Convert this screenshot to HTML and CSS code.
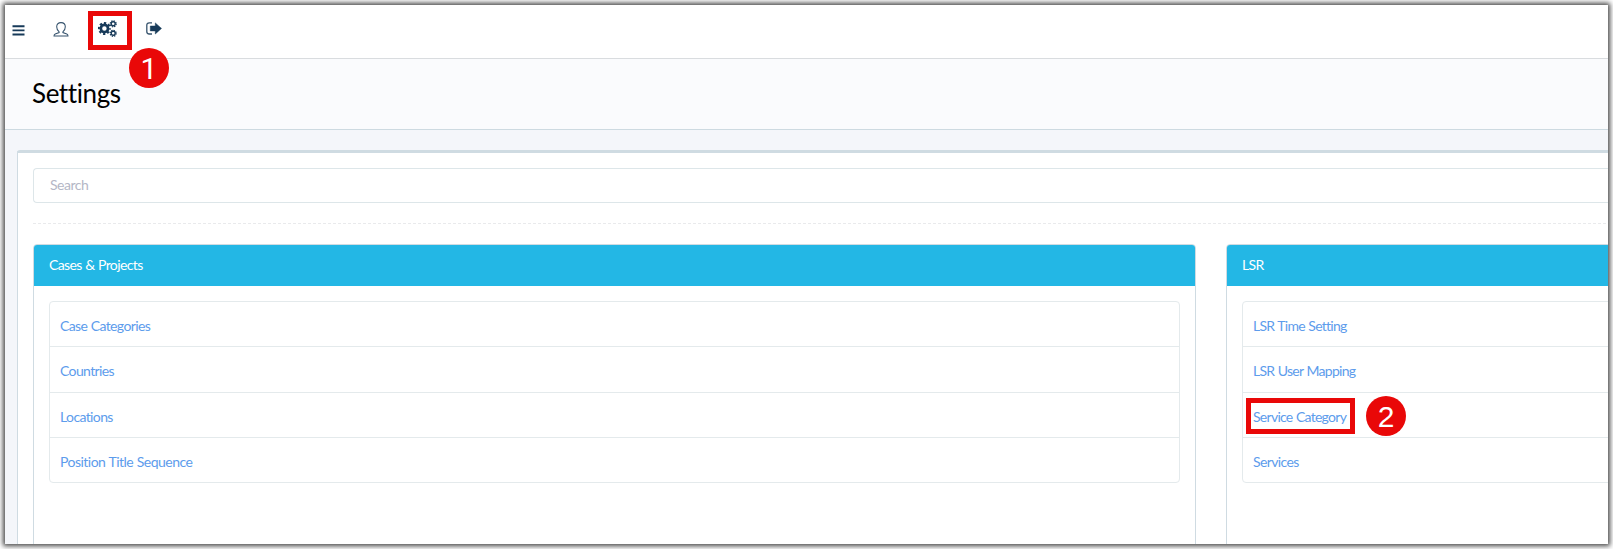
FILE: index.html
```
<!DOCTYPE html>
<html lang="en">
<head>
<meta charset="utf-8">
<title>Settings</title>
<link rel="stylesheet" href="styles.css">
</head>
<body>
<div class="frame">
  <nav class="topbar">
    <svg class="icon menu" viewBox="0 0 13 11"><path d="M.5 1.3h12M.5 5.4h12M.5 9.5h12" stroke="#173a59" stroke-width="1.9"/></svg>
    <svg class="icon user" viewBox="0 0 16 15"><path d="M6.1 9.8C4.6 8.7 3.7 6.9 3.7 4.8 3.7 2.2 5.4.6 8 .6s4.3 1.6 4.3 4.2c0 2.1-.9 3.9-2.4 5v.8l3.9 1.3c.9.3 1.2.8 1.2 2.1H1c0-1.3.3-1.8 1.2-2.1l3.9-1.3z" fill="none" stroke="#36536d" stroke-width="1.05"/></svg>
    <svg class="icon gears" viewBox="0 0 20 18">
      <g fill="none" stroke="#173a59">
        <circle cx="6.4" cy="8.5" r="3.6" stroke-width="2.7"/>
        <circle cx="6.4" cy="8.5" r="5.5" stroke-width="2" stroke-dasharray="2.3 2.02" stroke-dashoffset="1.15"/>
        <circle cx="15.2" cy="3.8" r="2" stroke-width="1.4"/>
        <circle cx="15.2" cy="3.8" r="3" stroke-width="1.2" stroke-dasharray="1.35 1.006"/>
        <circle cx="15.2" cy="13.3" r="2" stroke-width="1.4"/>
        <circle cx="15.2" cy="13.3" r="3" stroke-width="1.2" stroke-dasharray="1.35 1.006"/>
      </g>
    </svg>
    <svg class="icon exit" viewBox="0 0 16 13"><path d="M6 .8H3.3Q.8.8.8 3.3v6.2q0 2.5 2.5 2.5H6" fill="none" stroke="#36536d" stroke-width="1.3"/><path d="M4.3 4h5V.9L15.5 6.4 9.3 12V8.900h-5z" fill="#173a59" stroke="#173a59" stroke-width=".5" stroke-linejoin="round"/></svg>
    <span class="mark mark-gears"></span>
    <span class="step step-one">1</span>
  </nav>
  <header class="heading"><h1>Settings</h1></header>
  <main class="content">
    <section class="card">
      <div class="search">Search</div>
      <svg class="divider"><line x1="0" y1=".5" x2="1600" y2=".5" stroke="#e9eaec" stroke-dasharray="3 2"/></svg>
      <div class="panels">
        <section class="panel">
          <h2>Cases &amp; Projects</h2>
          <ul>
            <li><a>Case Categories</a></li>
            <li><a>Countries</a></li>
            <li><a>Locations</a></li>
            <li class="long"><a>Position Title Sequence</a></li>
          </ul>
        </section>
        <section class="panel">
          <h2>LSR</h2>
          <ul>
            <li class="tight"><a>LSR Time Setting</a></li>
            <li class="tight"><a>LSR User Mapping</a></li>
            <li class="tight"><a>Service Category</a><span class="mark mark-service"></span><span class="step step-two">2</span></li>
            <li><a>Services</a></li>
          </ul>
        </section>
      </div>
    </section>
  </main>
</div>
</body>
</html>
```
FILE: styles.css
```
* { box-sizing: border-box; }
body {
  margin: 0;
  padding: 5px;
  height: 549px;
  overflow: hidden;
  background: #fff;
  font-family: Lato, "Open Sans", sans-serif;
  font-size: 14px;
  letter-spacing: -0.62px;
  word-spacing: 0.5px;
}
.frame {
  width: 1603px;
  height: 539px;
  overflow: hidden;
  display: flex;
  flex-direction: column;
  background: #f4f6fa;
  box-shadow: 0 0 5px 2px #000b;
}
.topbar {
  position: relative;
  flex: 0 0 54px;
  display: flex;
  align-items: flex-start;
  background: #fff;
  border-bottom: 1px solid #d9dcdf;
}
.icon { display: block; flex: none; }
.menu { width: 13px; height: 11px; margin: 20px 0 0 7px; }
.user { width: 16px; height: 15px; margin: 17px 0 0 28px; }
.gears { width: 20px; height: 18px; margin: 15px 0 0 29px; }
.exit { width: 16px; height: 13px; margin: 17px 0 0 28px; }
.heading {
  flex: 0 0 71px;
  padding: 17px 27px;
  background: #fafbfd;
  border-bottom: 1px solid #cddae1;
}
h1 {
  margin: 0;
  font-size: 26px;
  line-height: 34px;
  font-weight: 400;
  letter-spacing: -0.4px;
  color: #000;
}
.content { flex: 1; padding: 20px 0 0 12px; }
.card {
  height: 500px;
  padding: 15px 0 0 15px;
  background: #fff;
  border: solid #cfdbe2;
  border-width: 3px 0 0 1px;
  border-radius: 3px 0 0 0;
}
.search {
  height: 35px;
  padding-left: 16px;
  line-height: 32px;
  letter-spacing: -0.5px;
  color: #b4b7c6;
  border: 1px solid #dde6e9;
  border-right: 0;
  border-radius: 4px 0 0 4px;
}
.divider { display: block; width: 100%; height: 1px; margin: 20px 0; }
.panels { display: grid; grid-template-columns: 1163px 1163px; gap: 30px; }
.panel {
  height: 400px;
  border: 1px solid #cfdbe2;
  border-radius: 4px;
  overflow: hidden;
}
h2 {
  margin: 0;
  height: 41px;
  padding-left: 15px;
  line-height: 40px;
  font-size: 14px;
  font-weight: 400;
  color: #fff;
  background: #23b7e5;
}
ul {
  list-style: none;
  margin: 15px;
  padding: 0;
  border: 1px solid #e4eaec;
  border-radius: 4px;
}
li {
  position: relative;
  height: 45.25px;
  padding: 2px 0 0 10px;
  line-height: 44px;
  color: #5d9cec;
  border-bottom: 1px solid #e4eaec;
}
li:last-child { height: 44.25px; border-bottom: 0; }
.long { letter-spacing: -0.52px; }
.tight { letter-spacing: -0.72px; }
.mark { position: absolute; border: 5px solid #e90808; }
.mark-gears { left: 83px; top: 6px; width: 44px; height: 39px; }
.mark-service { left: 3px; top: 5px; width: 109px; height: 36px; }
.step {
  position: absolute;
  z-index: 1;
  width: 40px;
  height: 40px;
  border-radius: 50%;
  background: #e90808;
  color: #fff;
  font: 30px/41px "Liberation Sans", Arial, sans-serif;
  letter-spacing: 0;
  text-align: center;
}
.step-one { left: 124px; top: 43px; font-family: Roboto, sans-serif; }
.step-two { left: 123px; top: 3px; }
```
